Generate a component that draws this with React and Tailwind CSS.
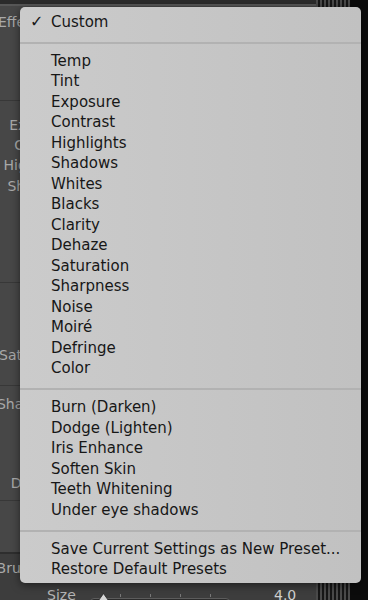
import React from 'react';

const font = { fontFamily: '"DejaVu Sans", "Liberation Sans", sans-serif' };

const groups = [
  ['Temp', 'Tint', 'Exposure', 'Contrast', 'Highlights', 'Shadows', 'Whites', 'Blacks', 'Clarity', 'Dehaze', 'Saturation', 'Sharpness', 'Noise', 'Moiré', 'Defringe', 'Color'],
  ['Burn (Darken)', 'Dodge (Lighten)', 'Iris Enhance', 'Soften Skin', 'Teeth Whitening', 'Under eye shadows'],
  ['Save Current Settings as New Preset...', 'Restore Default Presets'],
];

function Item({ label, checked }) {
  return (
    <div className="flex items-center h-[20.5px] text-[15px] leading-none text-[#171717] whitespace-nowrap">
      <span className="w-[31px] shrink-0 pl-[10px] text-[16px]">{checked ? '✓' : ''}</span>
      <span>{label}</span>
    </div>
  );
}

function Separator() {
  return <div className="mt-[9px] mb-[7.5px] h-[2px] bg-[#b2b2b2]" />;
}

// labels of the panel behind the popup; right aligned, the popup hides their ends
function Label({ text, h, pr }) {
  return (
    <div className="flex items-center justify-end text-[14px] text-[#a9a9a9] whitespace-nowrap" style={{ height: h, paddingRight: pr }}>
      {text}
    </div>
  );
}

export default function App() {
  return (
    <div className="relative w-[368px] h-[600px] overflow-hidden bg-[#0b0b0b] flex" style={font}>
      {/* panel behind the popup */}
      <div className="w-[350px] h-full flex flex-col bg-[#474747] overflow-hidden">
        <div className="h-[4px] bg-[#2b2b2b] shrink-0" />
        <div className="h-[2px] bg-[#575757] shrink-0" />
        <div className="flex flex-col h-[94px] shrink-0">
          <Label text="Effect:" h={32} pr={307} />
        </div>
        <div className="h-[1px] bg-[#383838] shrink-0" />
        <div className="flex flex-col h-[181px] pt-[14px] shrink-0">
          <Label text="Exposure" h={20.3} pr={276} />
          <Label text="Contrast" h={20.3} pr={276} />
          <Label text="Highlights" h={20.3} pr={276} />
          <Label text="Shadows" h={20.3} pr={280} />
        </div>
        <div className="h-[1px] bg-[#383838] shrink-0" />
        <div className="flex flex-col h-[102px] pt-[62px] shrink-0">
          <Label text="Saturation" h={20} pr={278} />
        </div>
        <div className="h-[1px] bg-[#383838] shrink-0" />
        <div className="flex flex-col h-[114px] pt-[8px] shrink-0">
          <Label text="Sharpness" h={20} pr={280} />
          <div className="h-[59px]" />
          <Label text="Density" h={20} pr={286} />
        </div>
        <div className="h-[1px] bg-[#383838] shrink-0" />
        <div className="h-[51px] shrink-0" />
        <div className="h-[2px] bg-[#2e2e2e] shrink-0" />
        <div className="flex-1 bg-[#3d3d3d] flex flex-col">
          <Label text="Brush" h={28} pr={313} />
          <div className="flex items-center h-[20px] pt-[6px] text-[14px] text-[#b4b4b4]">
            <span className="ml-[47px] w-[43px]">Size</span>
            <div className="relative w-[140px] h-[20px]">
              <div className="absolute left-0 right-0 top-[13px] h-[8px] rounded-sm bg-[#2c2c2c] border border-[#5c5c5c]" />
              <div className="absolute left-[30px] top-[9px] w-px h-[3px] bg-[#777]" />
              <div className="absolute left-[60px] top-[9px] w-px h-[3px] bg-[#777]" />
              <div className="absolute left-[90px] top-[9px] w-px h-[3px] bg-[#777]" />
              <div className="absolute left-[120px] top-[9px] w-px h-[3px] bg-[#777]" />
              <svg className="absolute left-[7px] top-[8px]" width="13" height="10" viewBox="0 0 13 10">
                <path d="M6.5 0.5 L12.5 9 L0.5 9 Z" fill="#d6d6d6" stroke="#222" strokeWidth="0.8" />
              </svg>
            </div>
            <span className="ml-[44px] text-[#d0d0d0]">4.0</span>
          </div>
        </div>
      </div>
      {/* striped scroll edge */}
      <div className="absolute top-0 bottom-0 left-[316px] w-[34px] bg-[repeating-linear-gradient(90deg,#4a4a4a_0px,#4a4a4a_2px,#161616_2px,#161616_4px)]" />
      <div className="w-[18px] h-full bg-[#0b0b0b]" />

      {/* popup menu */}
      <div className="absolute left-[20px] top-[7px] w-[341px] h-[576px] rounded-[5px] bg-linear-to-r from-[#cbcbcb] to-[#c1c1c1] shadow-[0_2px_8px_rgba(0,0,0,0.5)] pt-[5px]">
        <Item label="Custom" checked />
        {groups.map((g, i) => (
          <div key={i}>
            <Separator />
            {g.map((label) => (
              <Item key={label} label={label} />
            ))}
          </div>
        ))}
      </div>
    </div>
  );
}
